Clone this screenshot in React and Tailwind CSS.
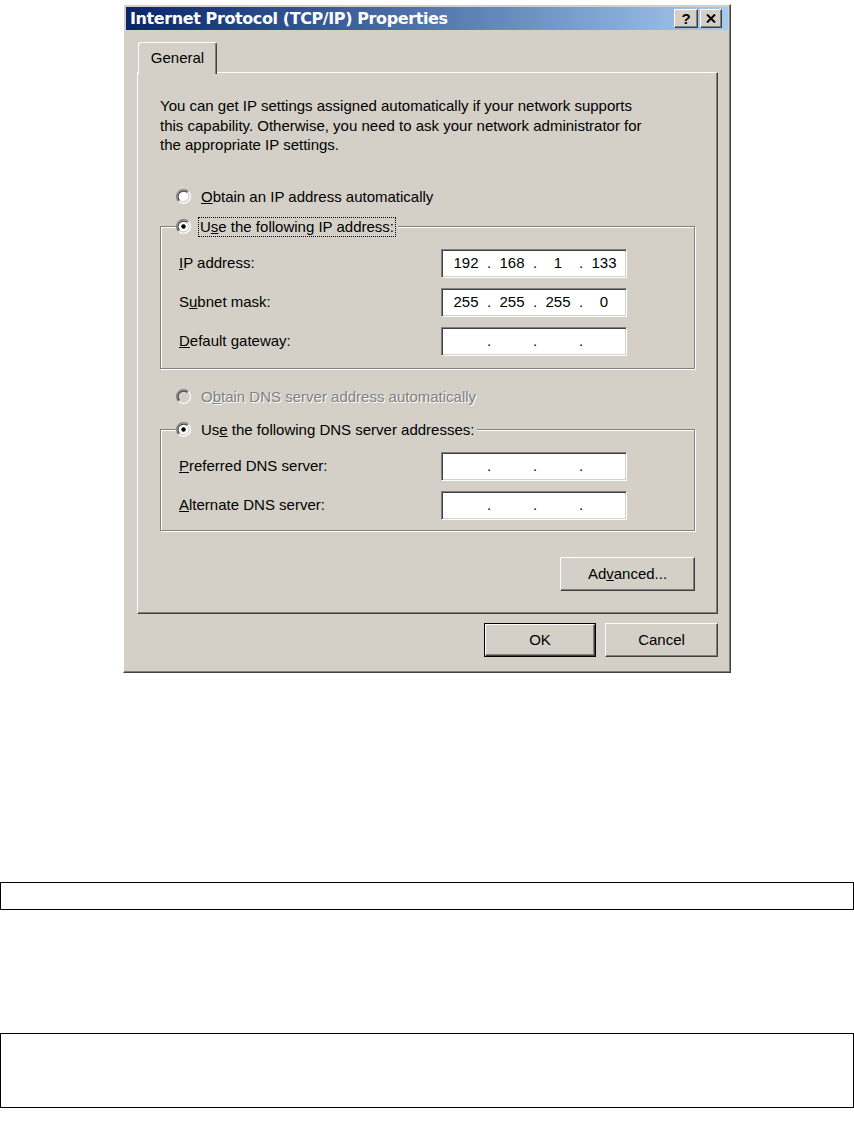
import React, { Fragment } from 'react';

const raised =
  'border border-t-white border-l-white border-b-[#404040] border-r-[#404040] shadow-[inset_-1px_-1px_0_#808080,inset_1px_1px_0_#d4d0c8]';
const sunken =
  'border border-t-[#808080] border-l-[#808080] border-b-white border-r-white shadow-[inset_1px_1px_0_#404040,inset_-1px_-1px_0_#d4d0c8]';

// classic 3D radio button
function Radio({ checked, disabled }) {
  return (
    <svg width="15" height="15" viewBox="0 0 12 12" className="shrink-0">
      <circle cx="6" cy="6" r="5" fill={disabled ? '#d4d0c8' : '#fff'} />
      <path d="M2.11 9.89 A5.5 5.5 0 0 1 9.89 2.11" stroke="#808080" fill="none" />
      <path d="M9.89 2.11 A5.5 5.5 0 0 1 2.11 9.89" stroke="#fff" fill="none" />
      <path d="M2.82 9.18 A4.5 4.5 0 0 1 9.18 2.82" stroke="#404040" fill="none" />
      <path d="M9.18 2.82 A4.5 4.5 0 0 1 2.82 9.18" stroke="#d4d0c8" fill="none" />
      {checked && <circle cx="6" cy="6" r="1.8" fill="#000" />}
    </svg>
  );
}

function IpField({ parts = ['', '', '', ''] }) {
  return (
    <div className={`w-[186px] h-[29px] bg-white flex items-center pl-[6px] ${sunken}`}>
      {parts.map((p, i) => (
        <Fragment key={i}>
          <span className="w-[36px] text-center">{p}</span>
          {i < 3 && <span className="w-[10px] text-center">.</span>}
        </Fragment>
      ))}
    </div>
  );
}

function Row({ label, parts }) {
  return (
    <div className="flex items-center h-[29px] pl-[18px]">
      <span className="w-[262px]">{label}</span>
      <IpField parts={parts} />
    </div>
  );
}

export default function App() {
  return (
    <div className="w-[854px] min-h-[1136px] bg-white text-black text-[15px] leading-[19.5px] font-['Liberation_Sans',Arial,sans-serif]">
      {/* Dialog window */}
      <div className={`ml-[123px] mt-[4px] w-[608px] h-[669px] bg-[#d4d0c8] p-[2px] ${raised}`}>
        {/* Title bar */}
        <div className="h-[23px] flex items-center justify-between pl-[4px] pr-[6px] bg-gradient-to-r from-[#0a246a] to-[#a6caf0]">
          <span className="text-white font-bold text-[16px] font-['DejaVu_Sans',sans-serif] tracking-[-0.4px]">
            Internet Protocol (TCP/IP) Properties
          </span>
          <div className="flex gap-[2px]">
            <div className={`w-[24px] h-[19px] bg-[#d4d0c8] flex items-center justify-center font-bold text-[15px] leading-none ${raised}`}>?</div>
            <div className={`w-[22px] h-[19px] bg-[#d4d0c8] flex items-center justify-center ${raised}`}>
              <svg width="10" height="9" viewBox="0 0 10 9">
                <path d="M1 0.5 L9 8.5 M9 0.5 L1 8.5" stroke="#000" strokeWidth="2" />
              </svg>
            </div>
          </div>
        </div>

        {/* Tab strip */}
        <div className="mt-[12px] ml-[11px] mr-[10px]">
          <div className="flex pl-[1px]">
            <div className="relative z-10 -mb-[2px] w-[79px] h-[32px] bg-[#d4d0c8] border-t border-l border-white border-r border-r-[#404040] shadow-[inset_-1px_0_0_#808080] rounded-t-[3px] flex items-center justify-center pb-[2px]">
              General
            </div>
          </div>

          {/* Tab panel */}
          <div className={`h-[542px] pt-[23px] px-[22px] ${raised}`}>
            <p>
              You can get IP settings assigned automatically if your network supports
              <br />
              this capability. Otherwise, you need to ask your network administrator for
              <br />
              the appropriate IP settings.
            </p>

            <div className="mt-[32px] h-[20px] flex items-center pl-[16px] gap-[10px]">
              <Radio />
              <span>
                <u>O</u>btain an IP address automatically
              </span>
            </div>

            <fieldset className="mt-[10px] border border-[#808080] shadow-[inset_1px_1px_0_#fff,1px_1px_0_#fff] pt-[12px] pb-[12px]">
              <legend className="ml-[15px] pr-[3px] h-[20px] flex items-center gap-[8px] bg-[#d4d0c8]">
                <Radio checked />
                <span className="outline outline-1 outline-dotted outline-black px-[1px] leading-[18px]">
                  U<u>s</u>e the following IP address:
                </span>
              </legend>
              <div className="flex flex-col gap-[10px]">
                <Row label={<><u>I</u>P address:</>} parts={['192', '168', '1', '133']} />
                <Row label={<>S<u>u</u>bnet mask:</>} parts={['255', '255', '255', '0']} />
                <Row label={<><u>D</u>efault gateway:</>} />
              </div>
            </fieldset>

            <div className="mt-[18px] h-[20px] flex items-center pl-[16px] gap-[10px]">
              <Radio disabled />
              <span className="text-[#808080] [text-shadow:1px_1px_0_#fff]">
                O<u>b</u>tain DNS server address automatically
              </span>
            </div>

            <fieldset className="mt-[13px] border border-[#808080] shadow-[inset_1px_1px_0_#fff,1px_1px_0_#fff] pt-[12px] pb-[10px]">
              <legend className="ml-[15px] pr-[3px] h-[20px] flex items-center gap-[10px] bg-[#d4d0c8]">
                <Radio checked />
                <span>
                  Us<u>e</u> the following DNS server addresses:
                </span>
              </legend>
              <div className="flex flex-col gap-[10px]">
                <Row label={<><u>P</u>referred DNS server:</>} />
                <Row label={<><u>A</u>lternate DNS server:</>} />
              </div>
            </fieldset>

            <div className="mt-[26px] flex justify-end">
              <button className={`w-[135px] h-[34px] bg-[#d4d0c8] ${raised}`}>
                Ad<u>v</u>anced...
              </button>
            </div>
          </div>

          {/* Dialog buttons */}
          <div className="mt-[9px] flex justify-end gap-[9px]">
            <div className="border border-black">
              <button className={`w-[110px] h-[32px] bg-[#d4d0c8] ${raised}`}>OK</button>
            </div>
            <button className={`w-[113px] h-[34px] bg-[#d4d0c8] ${raised}`}>Cancel</button>
          </div>
        </div>
      </div>

      {/* Empty boxes below */}
      <div className="mt-[209px] h-[28px] border border-black" />
      <div className="mt-[123px] h-[75px] border border-black" />
    </div>
  );
}
